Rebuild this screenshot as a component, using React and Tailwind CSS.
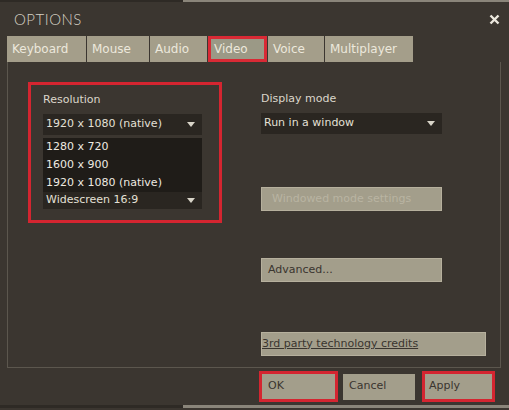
import React from 'react';

const font = { fontFamily: '"DejaVu Sans", Verdana, sans-serif' };

const tabs = [
  { label: 'Keyboard', w: 'w-[79px]' },
  { label: 'Mouse', w: 'w-[62px]' },
  { label: 'Audio', w: 'w-[57px]' },
  { label: 'Video', w: 'w-[59px]', active: true },
  { label: 'Voice', w: 'w-[56px]' },
  { label: 'Multiplayer', w: 'w-[88px]' },
];

const Arrow = () => (
  <svg width="8" height="5" viewBox="0 0 8 5" className="shrink-0">
    <path d="M0 0 H8 L4 5 Z" fill="#d8d4c8" />
  </svg>
);

const Dropdown = ({ value, className = '' }) => (
  <div className={`flex items-center justify-between bg-[#2a2621] pl-[3px] pr-[7px] text-[11px] text-[#e4e0d6] ${className}`}>
    <span>{value}</span>
    <Arrow />
  </div>
);

const Button = ({ children, className = '' }) => (
  <div className={`flex items-center bg-[#a39e8b] text-[11px] text-[#3a352f] ${className}`}>
    {children}
  </div>
);

export default function App() {
  return (
    <div className="w-[509px] h-[410px] bg-[#3b3630] flex flex-col overflow-hidden" style={font}>
      {/* top edge */}
      <div className="flex h-[2px] shrink-0">
        <div className="w-[183px] bg-[#2e2a25]" />
        <div className="flex-1 bg-[#8a857a]" />
      </div>

      {/* title bar */}
      <div className="h-[34px] flex items-center justify-between pl-[14px] pr-[9px] shrink-0">
        <span className="text-[15px] tracking-[0.5px] text-[#d6d1c4] font-light" style={{ fontFamily: 'Lato, sans-serif' }}>
          OPTIONS
        </span>
        <svg width="11" height="11" viewBox="0 0 11 11">
          <path d="M1.5 1.5 L9.5 9.5 M9.5 1.5 L1.5 9.5" stroke="#ece8de" strokeWidth="2.4" />
        </svg>
      </div>

      {/* tabs */}
      <div className="flex h-[26px] ml-[7px] gap-[1px] shrink-0">
        {tabs.map((t) => (
          <div
            key={t.label}
            className={`${t.w} h-full flex items-center text-[12px] text-[#ece8dc] ${
              t.active ? 'bg-[#9b9986] border-[3px] border-[#d92a35] pl-[3px]' : 'bg-[#a49e8a] pl-[5px]'
            }`}
          >
            {t.label}
          </div>
        ))}
      </div>

      {/* panel */}
      <div className="ml-[7px] mr-[8px] h-[306px] border-x border-b border-[#5c574e] flex shrink-0">
        {/* left column */}
        <div className="w-[240px] pl-[20px] pt-[20px]">
          <div className="w-[194px] h-[141px] border-[3px] border-[#d42530] pl-[12px] pr-[17px] pt-[8px]">
            <div className="text-[11px] text-[#dcd7cb] leading-[14px]">Resolution</div>
            <Dropdown value="1920 x 1080 (native)" className="mt-[7px] h-[21px]" />
            <div className="mt-[3px] bg-[#1f1c18] pl-[3px] pt-[1px] h-[54px] flex flex-col text-[11px] text-[#eeeae1]">
              <div className="h-[17px] flex items-center">1280 x 720</div>
              <div className="h-[18px] flex items-center">1600 x 900</div>
              <div className="h-[18px] flex items-center">1920 x 1080 (native)</div>
            </div>
            <Dropdown value="Widescreen 16:9" className="h-[17px] text-[#cfcabe]" />
          </div>
        </div>

        {/* right column */}
        <div className="pl-[13px] pt-[30px] flex flex-col">
          <div className="text-[11px] text-[#dcd7cb] leading-[14px]">Display mode</div>
          <Dropdown value="Run in a window" className="mt-[7px] h-[21px] w-[181px]" />
          <Button className="mt-[53px] h-[24px] w-[181px] pl-[10px] text-[#b9b4a2] border border-[#b6b09d]">
            Windowed mode settings
          </Button>
          <Button className="mt-[47px] h-[24px] w-[181px] pl-[6px] border border-[#b6b09d]">Advanced...</Button>
          <Button className="mt-[50px] h-[24px] w-[225px] underline border border-[#b6b09d]">
            3rd party technology credits
          </Button>
        </div>
      </div>

      {/* bottom buttons */}
      <div className="flex items-center justify-end gap-[5px] pr-[14px] h-[37px] shrink-0">
        <Button className="w-[79px] h-[31px] border-[3px] border-[#d42530] pl-[6px]">OK</Button>
        <Button className="w-[72px] h-[26px] pl-[6px] mr-[2px]">Cancel</Button>
        <Button className="w-[73px] h-[31px] border-[3px] border-[#d42530] pl-[4px]">Apply</Button>
      </div>

      {/* bottom edge */}
      <div className="flex h-[3px] shrink-0">
        <div className="w-[183px] bg-[#2e2a25]" />
        <div className="flex-1 bg-[#8a857a]" />
      </div>
    </div>
  );
}
